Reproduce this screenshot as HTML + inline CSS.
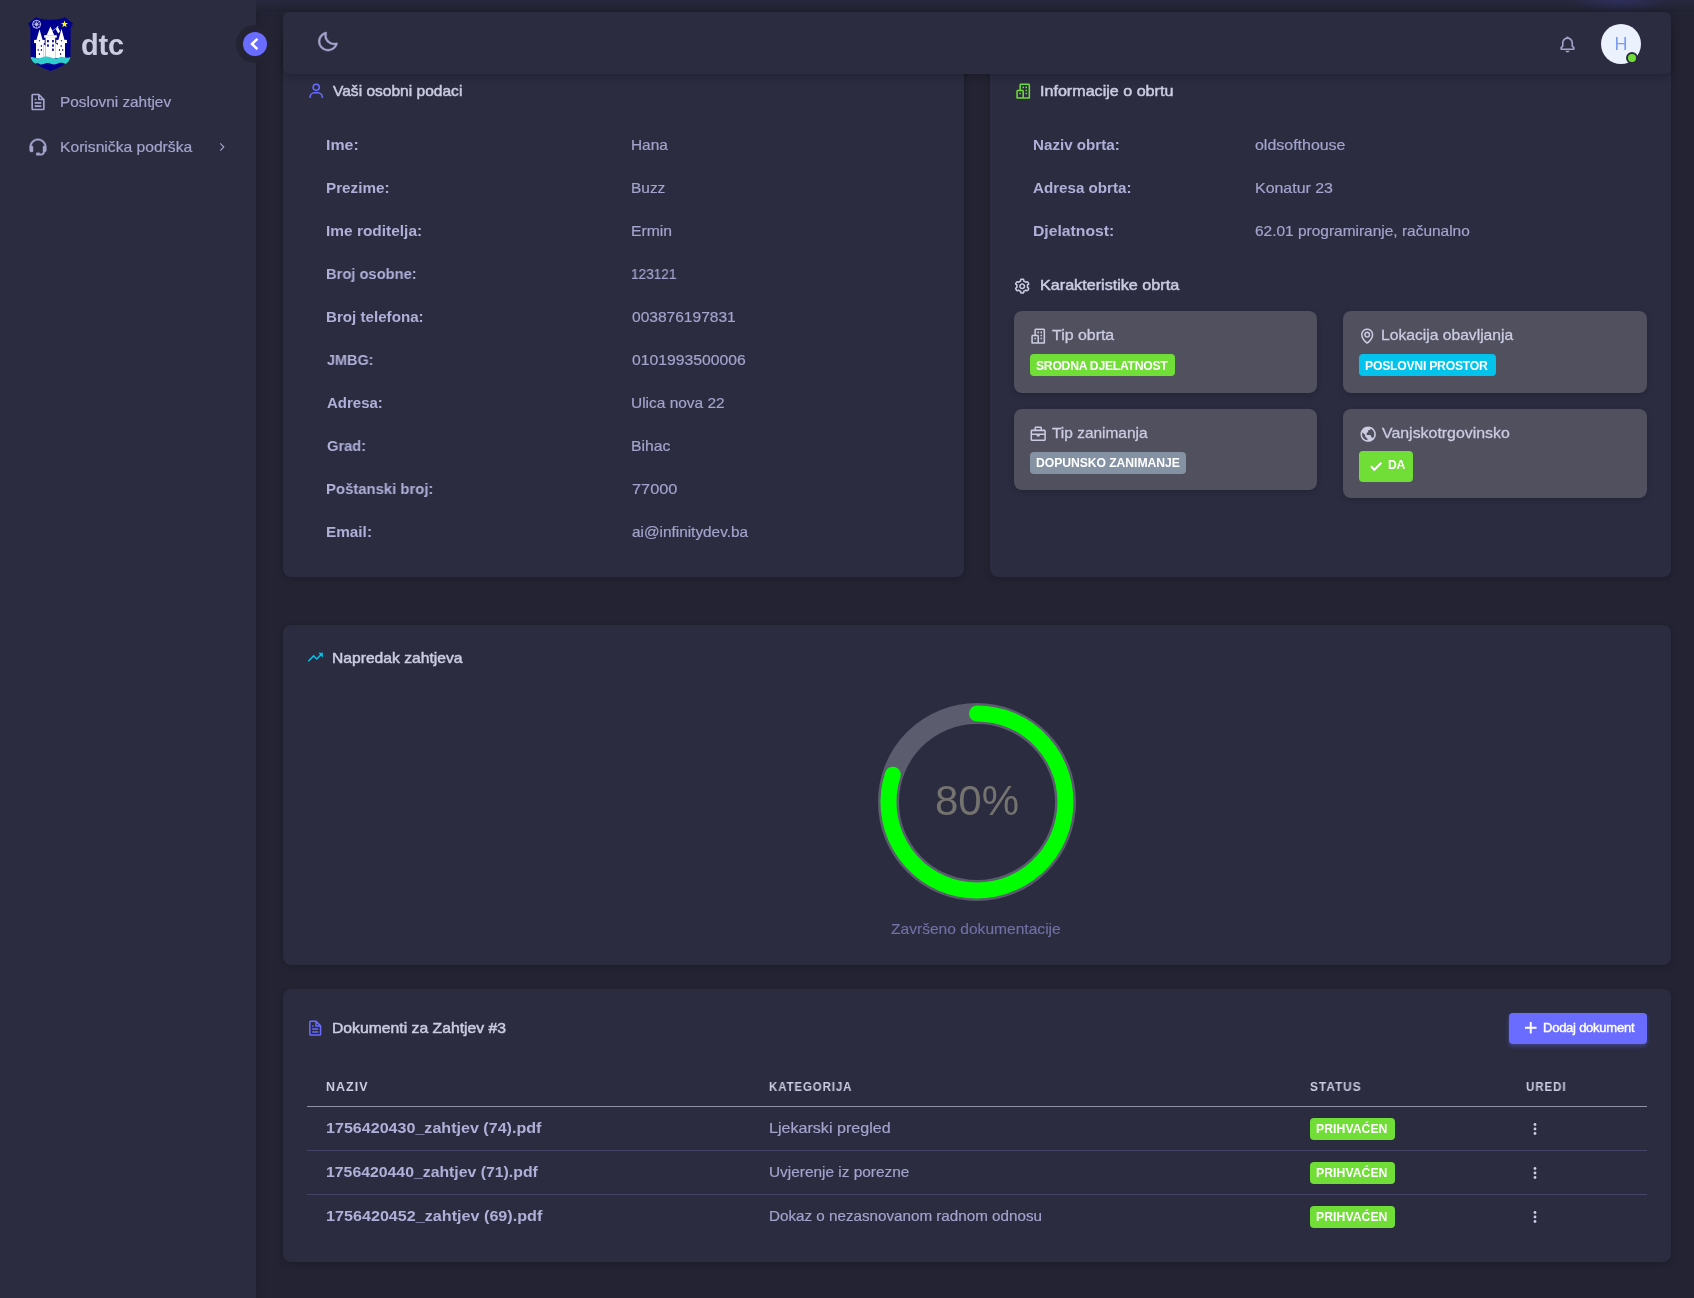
<!DOCTYPE html>
<html lang="bs">
<head>
<meta charset="utf-8">
<title>dtc - Poslovni zahtjev</title>
<style>
*{box-sizing:border-box;margin:0;padding:0}
html,body{width:1694px;height:1298px;overflow:hidden}
body{background:#232333;font-family:"Liberation Sans",sans-serif;color:#a3a4cc;font-size:15px;position:relative}
.abs{position:absolute}
.t{will-change:transform;transform-origin:0 50%;position:absolute;white-space:nowrap;line-height:20px;height:20px}
#sidebar{position:absolute;left:0;top:0;width:256px;height:1298px;background:#2b2c40;box-shadow:0 2px 10px rgba(0,0,0,.2)}
.card{position:absolute;background:#2b2c40;border-radius:8px;box-shadow:0 2px 6px rgba(0,0,0,.2)}
#navbar{position:absolute;left:283px;top:12px;width:1388px;height:62px;background:#2b2c40;border-radius:6px;box-shadow:0 2px 8px rgba(0,0,0,.25)}
.lbl{font-weight:700;color:#afb0d8}
.val{color:#a3a4cc;-webkit-text-stroke:.2px #a3a4cc}
.hd{color:#cbcbe2;font-size:15px;-webkit-text-stroke:.5px #cbcbe2}
.menu{color:#a3a4cc;font-size:15px;-webkit-text-stroke:.2px #a3a4cc}
.box{position:absolute;background:#50505e;border-radius:8px;box-shadow:0 2px 6px rgba(0,0,0,.18)}
.bh{color:#cbcbe2;font-size:15px;-webkit-text-stroke:.3px #cbcbe2}
.badge{position:absolute;color:#fff;font-weight:700;font-size:12px;line-height:21px;height:21px;border-radius:4px;text-align:center;white-space:nowrap}
.th{color:#cbcbe2;font-weight:700;font-size:12px}
.bt{color:#fff;font-weight:700;font-size:12.19px}
.cap{color:#7071a4;font-size:15px;-webkit-text-stroke:.15px #7071a4}
.btn{color:#fff;font-size:13px;-webkit-text-stroke:.4px #fff}
.brand{will-change:transform;position:absolute;white-space:nowrap;font-size:29px;font-weight:700;color:#cbcbe2;line-height:36px;height:36px}
.hr{position:absolute;left:307px;width:1340px;height:1px;background:#444564}
</style>
</head>
<body>

<!-- SIDEBAR -->
<div id="sidebar"></div>

<!-- logo -->
<svg class="abs" style="left:24px;top:12px" width="60" height="64" viewBox="0 0 60 64">
  <path d="M12.3 4.9 L4.2 11.6 L6.4 16.3 L6.6 44.4 C7.5 50 16 55 26.6 59 C37 55 45.6 50 46.5 44.4 L46.7 16.3 L48.9 11.6 L40.6 4.9 C36 8.6 17 8.6 12.3 4.9 Z" fill="#00008f"/>
  <!-- castle -->
  <g fill="#fff">
    <path d="M15.5 17.3 L18.6 27.9 L12.5 27.9 Z"/>
    <rect x="10.1" y="27.9" width="10.6" height="3.2"/>
    <rect x="12" y="30.5" width="7.8" height="16"/>
    <path d="M26.5 14.6 L30.2 23.2 L22.6 23.2 Z"/>
    <rect x="20.2" y="23.2" width="12.6" height="2.5"/>
    <rect x="21.6" y="25.2" width="9.6" height="21.5"/>
    <path d="M37.5 17.1 L40.5 27.9 L34.4 27.9 Z"/>
    <rect x="32.3" y="27.9" width="10.6" height="3.2"/>
    <rect x="34" y="30.5" width="7" height="16"/>
    <path d="M19.8 32.5 L21.6 33.5 L21.6 46 L19.8 46 Z"/>
    <path d="M31.2 31 L34 33 L34 46 L31.2 46 Z"/>
    <path d="M33.4 14 L36 19.5 L34.2 21.4 L32 17.5 Z"/>
  </g>
  <path d="M21.7 24.2 L34.5 14.3" stroke="#fff" stroke-width=".6" fill="none"/>
  <g fill="#1a1a9a">
    <rect x="23" y="28" width="1.9" height="2.3"/><rect x="28" y="28" width="1.9" height="2.3"/>
    <rect x="23" y="32.4" width="1.9" height="2.3"/><rect x="28" y="32.4" width="1.9" height="2.3"/>
    <rect x="28" y="36.6" width="1.9" height="2.3"/>
    <ellipse cx="15.5" cy="28.7" rx=".7" ry=".8"/><ellipse cx="37.5" cy="28.7" rx=".7" ry=".8"/>
    <ellipse cx="17.4" cy="33.9" rx=".7" ry="1"/><ellipse cx="37.2" cy="33.9" rx=".7" ry="1"/>
    <ellipse cx="14.2" cy="37.9" rx=".7" ry="1"/><ellipse cx="17.4" cy="37.9" rx=".7" ry="1"/>
    <ellipse cx="35.5" cy="37.9" rx=".7" ry="1"/><ellipse cx="38.7" cy="37.9" rx=".7" ry="1"/>
    <ellipse cx="15.4" cy="42" rx=".7" ry="1"/><ellipse cx="36.6" cy="42" rx=".7" ry="1"/>
  </g>
  <!-- water -->
  <path d="M6.7 45.2 C10 44 11.5 47.5 15.5 46.3 C20 44.5 23 43.8 27 45.5 C31 47.5 33 46.5 36 45 C39 43.8 42.5 47 46.4 45 C45.8 48.5 44 50.2 41.5 52 C38 50 35 51 31.5 52.3 C28 53 26.5 50.8 23 51 C19.5 51.5 18 53.2 15.8 52.2 C14 51 12.8 50.6 11.5 51.8 C9 50 7.2 48 6.7 45.2 Z" fill="#33cccc"/>
  <!-- star -->
  <path d="M40.5 8.6 L41.4 11 L43.9 11.1 L41.9 12.7 L42.6 15.2 L40.5 13.8 L38.4 15.2 L39.1 12.7 L37.1 11.1 L39.6 11 Z" fill="#ffff00"/>
  <!-- wheel -->
  <g fill="none" stroke="#e8e8ff" stroke-width=".8">
    <circle cx="12.6" cy="12.3" r="4"/>
    <circle cx="12.6" cy="12.3" r="1.2" stroke-width=".6"/>
    <path d="M12.6 8.3v8M8.6 12.3h8M9.8 9.5l5.6 5.6M15.4 9.5l-5.6 5.6" stroke-width=".5"/>
  </g>
</svg>

<!-- toggle -->
<div class="abs" style="left:236px;top:25px;width:38px;height:38px;border-radius:50%;background:#232333"></div>
<div class="abs" style="left:243px;top:32px;width:24px;height:24px;border-radius:50%;background:#696cff"></div>
<svg class="abs" style="left:243px;top:32px" width="24" height="24" viewBox="0 0 24 24"><path d="M14.4 6.8 L9 12 L14.4 17.2" fill="none" stroke="#fff" stroke-width="2.5"/></svg>

<!-- menu items -->
<svg class="abs" style="left:28.15px;top:92.35px" width="20" height="20" viewBox="0 0 24 24" fill="#a3a4cc"><path d="M19.903 8.586a.997.997 0 0 0-.196-.293l-6-6a.997.997 0 0 0-.293-.196c-.03-.014-.062-.022-.094-.033a.991.991 0 0 0-.259-.051C13.040 2.011 13.021 2 13 2H6c-1.103 0-2 .897-2 2v16c0 1.103.897 2 2 2h12c1.103 0 2-.897 2-2V9c0-.021-.011-.04-.013-.062a.952.952 0 0 0-.051-.259c-.01-.032-.019-.063-.033-.093zM16.586 8H14V5.414L16.586 8zM6 20V4h6v5a1 1 0 0 0 1 1h5l.002 10H6z"/><path d="M8 12h8v2H8zm0 4h8v2H8zm0-8h2v2H8z"/></svg>

<svg class="abs" style="left:28px;top:137.4px" width="20" height="20" viewBox="0 0 24 24" fill="#a3a4cc" stroke="#a3a4cc" stroke-width=".5"><path d="M12 2C6.486 2 2 6.486 2 12v4.143C2 17.167 2.897 18 4 18h1a1 1 0 0 0 1-1v-5.143a1 1 0 0 0-1-1h-.908C4.648 6.987 7.978 4 12 4s7.352 2.987 7.908 6.857H19a1 1 0 0 0-1 1V18c0 1.103-.897 2-2 2h-2v-1h-4v3h6c2.206 0 4-1.794 4-4 1.103 0 2-.833 2-1.857V12c0-5.514-4.486-10-10-10z"/></svg>
<svg class="abs" style="left:213.3px;top:138.2px" width="18" height="18" viewBox="0 0 24 24"><path d="M9.7 7.3 L14.4 12 L9.7 16.7" fill="none" stroke="#a3a4cc" stroke-width="1.5"/></svg>

<!-- CARDS (under navbar) -->
<div class="card" style="left:283px;top:30px;width:681px;height:547px"></div>
<div class="card" style="left:990px;top:30px;width:681px;height:547px"></div>
<div class="card" style="left:283px;top:625px;width:1388px;height:340px"></div>
<div class="card" style="left:283px;top:989px;width:1388px;height:272.6px"></div>

<!-- NAVBAR -->
<div class="abs" style="left:256px;top:0;width:1438px;height:12px;background:radial-gradient(ellipse 52px 12px at 1364px 0px,rgba(58,58,140,.4),rgba(58,58,140,0) 100%),linear-gradient(#27283d,#202131)"></div>
<div id="navbar"></div>
<svg class="abs" style="left:315.55px;top:30.05px" width="23.5" height="23.5" viewBox="0 0 24 24" fill="#a3a4cc" stroke="#a3a4cc" stroke-width=".35"><path d="M20.742 13.045a8.088 8.088 0 0 1-2.077.271c-2.135 0-4.140-.83-5.646-2.336a8.025 8.025 0 0 1-2.064-7.723A1 1 0 0 0 9.730 2.034a10.014 10.014 0 0 0-4.489 2.582c-3.898 3.898-3.898 10.243 0 14.143a9.937 9.937 0 0 0 7.072 2.930 9.930 9.930 0 0 0 7.070-2.929 10.007 10.007 0 0 0 2.583-4.491 1.001 1.001 0 0 0-1.224-1.224zm-2.772 4.301a7.947 7.947 0 0 1-5.656 2.343 7.953 7.953 0 0 1-5.658-2.344c-3.118-3.119-3.118-8.195 0-11.314a7.923 7.923 0 0 1 2.060-1.483 10.027 10.027 0 0 0 2.890 7.848 9.972 9.972 0 0 0 7.848 2.891 8.036 8.036 0 0 1-1.484 2.059z"/></svg>
<svg class="abs" style="left:1558px;top:34.7px" width="19" height="19" viewBox="0 0 24 24" fill="#a3a4cc"><path d="M19 13.586V10c0-3.217-2.185-5.927-5.145-6.742C13.562 2.520 12.846 2 12 2s-1.562.520-1.855 1.258C7.185 4.074 5 6.783 5 10v3.586l-1.707 1.707A.996.996 0 0 0 3 16v2a1 1 0 0 0 1 1h16a1 1 0 0 0 1-1v-2a.996.996 0 0 0-.293-.707L19 13.586zM19 17H5v-.586l1.707-1.707A.996.996 0 0 0 7 14v-4c0-2.757 2.243-5 5-5s5 2.243 5 5v4c0 .266.105.520.293.707L19 16.414V17zm-7 5a2.980 2.980 0 0 0 2.818-2H9.182A2.980 2.980 0 0 0 12 22z"/></svg>
<div class="abs" style="left:1601px;top:24px;width:40px;height:40px;border-radius:50%;background:#ebf2fe"></div>
<div class="t" style="left:1601px;top:24px;width:40px;height:40px;line-height:40px;text-align:center;font-size:18px;color:#7c9cf2">H</div>
<div class="abs" style="left:1626px;top:52px;width:12px;height:12px;border-radius:50%;background:#71dd37;border:2px solid #2b2c40"></div>

<!-- CARD 1 content -->
<svg class="abs" style="left:306.5px;top:82px" width="18.4" height="18.4" viewBox="0 0 24 24" fill="#696cff"><path d="M12 2a5 5 0 1 0 5 5 5 5 0 0 0-5-5zm0 8a3 3 0 1 1 3-3 3 3 0 0 1-3 3zm9 11v-1a7 7 0 0 0-7-7h-4a7 7 0 0 0-7 7v1h2v-1a5 5 0 0 1 5-5h4a5 5 0 0 1 5 5v1z"/></svg>


<!-- CARD 2 content -->
<svg class="abs" style="left:1013.9px;top:82px" width="18.4" height="18.4" viewBox="0 0 24 24" fill="#71dd37"><path d="M19 2H9c-1.103 0-2 .897-2 2v6H5c-1.103 0-2 .897-2 2v9a1 1 0 0 0 1 1h16a1 1 0 0 0 1-1V4c0-1.103-.897-2-2-2zM5 12h6v8H5v-8zm14 8h-6v-8c0-1.103-.897-2-2-2H9V4h10v16z"/><path d="M11 6h2v2h-2zm4 0h2v2h-2zm0 4.031h2V12h-2zM15 14h2v2h-2zm-8 .001h2v2H7z"/></svg>

<svg class="abs" style="left:1012.6px;top:277px" width="18.4" height="18.4" viewBox="0 0 24 24" fill="#cbcbe2"><path d="M12 16c2.206 0 4-1.794 4-4s-1.794-4-4-4-4 1.794-4 4 1.794 4 4 4zm0-6c1.084 0 2 .916 2 2s-.916 2-2 2-2-.916-2-2 .916-2 2-2z"/><path d="m2.845 16.136 1 1.730c.531.917 1.809 1.261 2.730.730l.529-.306A8.100 8.100 0 0 0 9 19.402V20c0 1.103.897 2 2 2h2c1.103 0 2-.897 2-2v-.598a8.132 8.132 0 0 0 1.896-1.111l.529.306c.923.530 2.198.188 2.731-.731l.999-1.729a2.001 2.001 0 0 0-.731-2.732l-.505-.292a7.718 7.718 0 0 0 0-2.224l.505-.292a2.002 2.002 0 0 0 .731-2.732l-.999-1.729c-.531-.920-1.808-1.265-2.731-.732l-.529.306A8.100 8.100 0 0 0 15 4.598V4c0-1.103-.897-2-2-2h-2c-1.103 0-2 .897-2 2v.598a8.132 8.132 0 0 0-1.896 1.111l-.529-.306c-.924-.531-2.200-.187-2.731.732l-.999 1.729a2.001 2.001 0 0 0 .731 2.732l.505.292a7.683 7.683 0 0 0 0 2.223l-.505.292a2.003 2.003 0 0 0-.731 2.733zm3.326-2.758A5.703 5.703 0 0 1 6 12c0-.462.058-.926.170-1.378a.999.999 0 0 0-.47-1.108l-1.123-.650.998-1.729 1.145.662a.997.997 0 0 0 1.188-.142 6.071 6.071 0 0 1 2.384-1.399A1 1 0 0 0 11 5.300V4h2v1.300a1 1 0 0 0 .708.956 6.083 6.083 0 0 1 2.384 1.399.999.999 0 0 0 1.188.142l1.144-.661 1 1.729-1.124.649a1 1 0 0 0-.470 1.108c.112.452.170.916.170 1.378 0 .461-.058.925-.171 1.378a1 1 0 0 0 .471 1.108l1.123.649-.998 1.729-1.145-.661a.996.996 0 0 0-1.188.142 6.071 6.071 0 0 1-2.384 1.399A1 1 0 0 0 13 18.700l.002 1.300H11v-1.300a1 1 0 0 0-.708-.956 6.083 6.083 0 0 1-2.384-1.399.992.992 0 0 0-1.188-.141l-1.144.662-1-1.729 1.124-.651a1 1 0 0 0 .471-1.108z"/></svg>

<div class="box" style="left:1014px;top:311px;width:303px;height:82px"></div>
<div class="box" style="left:1343px;top:311px;width:304px;height:82px"></div>
<div class="box" style="left:1014px;top:409px;width:303px;height:81px"></div>
<div class="box" style="left:1343px;top:409px;width:304px;height:89px"></div>

<svg class="abs" style="left:1029px;top:327px" width="18.4" height="18.4" viewBox="0 0 24 24" fill="#cbcbe2"><path d="M19 2H9c-1.103 0-2 .897-2 2v6H5c-1.103 0-2 .897-2 2v9a1 1 0 0 0 1 1h16a1 1 0 0 0 1-1V4c0-1.103-.897-2-2-2zM5 12h6v8H5v-8zm14 8h-6v-8c0-1.103-.897-2-2-2H9V4h10v16z"/><path d="M11 6h2v2h-2zm4 0h2v2h-2zm0 4.031h2V12h-2zM15 14h2v2h-2zm-8 .001h2v2H7z"/></svg>
<div class="badge" style="left:1030px;top:354px;width:145px;height:22px;background:#71dd37"></div>

<svg class="abs" style="left:1358.3px;top:327.2px" width="18.4" height="18.4" viewBox="0 0 24 24" fill="#cbcbe2"><path d="M12 14c2.206 0 4-1.794 4-4s-1.794-4-4-4-4 1.794-4 4 1.794 4 4 4zm0-6c1.103 0 2 .897 2 2s-.897 2-2 2-2-.897-2-2 .897-2 2-2z"/><path d="M11.420 21.814a.998.998 0 0 0 1.160 0C12.884 21.599 20.029 16.440 20 10c0-4.411-3.589-8-8-8S4 5.589 4 9.995c-.029 6.445 7.116 11.604 7.420 11.819zM12 4c3.309 0 6 2.691 6 6.005.021 4.438-4.388 8.423-6 9.730-1.611-1.308-6.021-5.294-6-9.735 0-3.309 2.691-6 6-6z"/></svg>
<div class="badge" style="left:1359px;top:354px;width:137px;height:22px;background:#03c3ec"></div>

<svg class="abs" style="left:1029px;top:425px" width="18.4" height="18.4" viewBox="0 0 24 24" fill="#cbcbe2"><path d="M20 6h-3V4c0-1.103-.897-2-2-2H9c-1.103 0-2 .897-2 2v2H4c-1.103 0-2 .897-2 2v11c0 1.103.897 2 2 2h16c1.103 0 2-.897 2-2V8c0-1.103-.897-2-2-2zm-5-2v2H9V4h6zM8 8h12v3H4V8h4zM4 19v-6h6v2h4v-2h6l.001 6H4z"/></svg>
<div class="badge" style="left:1030px;top:452px;width:156px;height:22px;background:#8592a3"></div>

<svg class="abs" style="left:1358.6px;top:424.8px" width="18.4" height="18.4" viewBox="0 0 24 24" fill="#cbcbe2"><path d="M12 2C6.486 2 2 6.486 2 12s4.486 10 10 10 10-4.486 10-10S17.514 2 12 2zM4 12c0-.899.156-1.762.431-2.569L6 11l2 2v2l2 2 1 1v1.931C7.061 19.436 4 16.072 4 12zm14.330 4.873C17.677 16.347 16.687 16 16 16v-1a2 2 0 0 0-2-2h-4v-3a2 2 0 0 0 2-2V7h1a2 2 0 0 0 2-2v-.411C17.928 5.778 20 8.650 20 12a7.947 7.947 0 0 1-1.670 4.873z"/></svg>
<div class="badge" style="left:1359px;top:451px;width:54px;height:31px;line-height:29px;background:#71dd37;text-align:left;padding-left:30px"></div>
<svg class="abs" style="left:1367.5px;top:458.3px" width="16" height="16" viewBox="0 0 24 24"><path d="M4.5 12.5 L9.5 17.5 L20 7" fill="none" stroke="#fff" stroke-width="3.2"/></svg>

<!-- CARD 3 -->
<svg class="abs" style="left:306.2px;top:649px" width="18.4" height="18.4" viewBox="0 0 24 24" fill="#03c3ec"><path d="m10 10.414 4 4 5.707-5.707L22 11V5h-6l2.293 2.293L14 11.586l-4-4-7.707 7.707 1.414 1.414z"/></svg>

<svg class="abs" style="left:867px;top:692px;will-change:transform" width="220" height="220" viewBox="0 0 220 220">
  <circle cx="110" cy="110" r="88.5" fill="none" stroke="#5b5c6e" stroke-width="21"/>
  <path d="M110 21.5 A88.5 88.5 0 1 1 25.83 82.65" fill="none" stroke="#00ff00" stroke-width="16" stroke-linecap="round"/>
  <text x="110" y="122.6" text-anchor="middle" font-family="Liberation Sans, sans-serif" font-size="42" fill="#75736f">80%</text>
</svg>

<!-- CARD 4 -->
<svg class="abs" style="left:306.2px;top:1019.2px" width="18.4" height="18.4" viewBox="0 0 24 24" fill="#696cff"><path d="M19.903 8.586a.997.997 0 0 0-.196-.293l-6-6a.997.997 0 0 0-.293-.196c-.03-.014-.062-.022-.094-.033a.991.991 0 0 0-.259-.051C13.040 2.011 13.021 2 13 2H6c-1.103 0-2 .897-2 2v16c0 1.103.897 2 2 2h12c1.103 0 2-.897 2-2V9c0-.021-.011-.04-.013-.062a.952.952 0 0 0-.051-.259c-.01-.032-.019-.063-.033-.093zM16.586 8H14V5.414L16.586 8zM6 20V4h6v5a1 1 0 0 0 1 1h5l.002 10H6z"/><path d="M8 12h8v2H8zm0 4h8v2H8zm0-8h2v2H8z"/></svg>

<div class="abs" style="left:1509px;top:1013px;width:138px;height:31px;background:#696cff;border-radius:4px;box-shadow:0 2px 4px rgba(105,108,255,.4)"></div>
<svg class="abs" style="left:1522.5px;top:1020.3px" width="15.5" height="15.5" viewBox="0 0 24 24"><path d="M12 3v18M3 12h18" stroke="#fff" stroke-width="3" fill="none"/></svg>

<div class="hr" style="top:1106px;background:#9192a5"></div>

<div class="badge" style="left:1310px;top:1118px;width:85px;height:22px;background:#71dd37"></div>
<div class="hr" style="top:1150px"></div>

<div class="badge" style="left:1310px;top:1162px;width:85px;height:22px;background:#71dd37"></div>
<div class="hr" style="top:1194px"></div>

<div class="badge" style="left:1310px;top:1206px;width:85px;height:22px;background:#71dd37"></div>

<svg class="abs" style="left:1526px;top:1120px" width="18" height="18" viewBox="0 0 24 24" fill="#cbcbe2"><circle cx="12" cy="6" r="1.9"/><circle cx="12" cy="12" r="1.9"/><circle cx="12" cy="18" r="1.9"/></svg>
<svg class="abs" style="left:1526px;top:1164px" width="18" height="18" viewBox="0 0 24 24" fill="#cbcbe2"><circle cx="12" cy="6" r="1.9"/><circle cx="12" cy="12" r="1.9"/><circle cx="12" cy="18" r="1.9"/></svg>
<svg class="abs" style="left:1526px;top:1208px" width="18" height="18" viewBox="0 0 24 24" fill="#cbcbe2"><circle cx="12" cy="6" r="1.9"/><circle cx="12" cy="12" r="1.9"/><circle cx="12" cy="18" r="1.9"/></svg>

<div class="brand" style="left:80.88px;top:26.5px;letter-spacing:-0.225px;">dtc</div>
<div class="t menu" style="left:59.54px;top:92px;transform:scaleX(1.0250);">Poslovni zahtjev</div>
<div class="t menu" style="left:59.54px;top:137px;transform:scaleX(1.0429);">Korisnička podrška</div>
<div class="t hd" style="left:333.39px;top:81px;transform:scaleX(1.0364);">Vaši osobni podaci</div>
<div class="t hd" style="left:1039.71px;top:81px;transform:scaleX(1.0733);">Informacije o obrtu</div>
<div class="t hd" style="left:1039.71px;top:275px;transform:scaleX(1.0768);">Karakteristike obrta</div>
<div class="t hd" style="left:332.49px;top:648px;transform:scaleX(1.0433);">Napredak zahtjeva</div>
<div class="t hd" style="left:332.15px;top:1018px;transform:scaleX(1.0491);">Dokumenti za Zahtjev #3</div>
<div class="t lbl" style="left:325.93px;top:135px;transform:scaleX(1.0628);">Ime:</div>
<div class="t lbl" style="left:325.93px;top:178px;transform:scaleX(1.0153);">Prezime:</div>
<div class="t lbl" style="left:325.93px;top:221px;transform:scaleX(1.0297);">Ime roditelja:</div>
<div class="t lbl" style="left:325.93px;top:264px;transform:scaleX(0.9801);">Broj osobne:</div>
<div class="t lbl" style="left:325.93px;top:307px;transform:scaleX(1.0096);">Broj telefona:</div>
<div class="t lbl" style="left:327.00px;top:350px;transform:scaleX(0.9622);">JMBG:</div>
<div class="t lbl" style="left:327.00px;top:393px;">Adresa:</div>
<div class="t lbl" style="left:326.83px;top:436px;transform:scaleX(0.9776);">Grad:</div>
<div class="t lbl" style="left:325.93px;top:479px;transform:scaleX(0.9916);">Poštanski broj:</div>
<div class="t lbl" style="left:325.93px;top:522px;transform:scaleX(1.0215);">Email:</div>
<div class="t val" style="left:631.10px;top:135px;transform:scaleX(1.0257);">Hana</div>
<div class="t val" style="left:631.10px;top:178px;transform:scaleX(1.0292);">Buzz</div>
<div class="t val" style="left:631.10px;top:221px;transform:scaleX(1.0481);">Ermin</div>
<div class="t val" style="left:631.10px;top:264px;transform:scaleX(0.9083);">123121</div>
<div class="t val" style="left:631.61px;top:307px;transform:scaleX(1.0360);">003876197831</div>
<div class="t val" style="left:631.61px;top:350px;transform:scaleX(1.0501);">0101993500006</div>
<div class="t val" style="left:630.71px;top:393px;transform:scaleX(1.0302);">Ulica nova 22</div>
<div class="t val" style="left:630.71px;top:436px;transform:scaleX(1.0500);">Bihac</div>
<div class="t val" style="left:631.61px;top:479px;transform:scaleX(1.0883);">77000</div>
<div class="t val" style="left:631.61px;top:522px;transform:scaleX(1.0237);">ai@infinitydev.ba</div>
<div class="t lbl" style="left:1032.54px;top:135px;transform:scaleX(1.0109);">Naziv obrta:</div>
<div class="t lbl" style="left:1033.44px;top:178px;transform:scaleX(1.0095);">Adresa obrta:</div>
<div class="t lbl" style="left:1032.54px;top:221px;transform:scaleX(1.0482);">Djelatnost:</div>
<div class="t val" style="left:1255.17px;top:135px;transform:scaleX(1.0636);">oldsofthouse</div>
<div class="t val" style="left:1254.66px;top:178px;transform:scaleX(1.0627);">Konatur 23</div>
<div class="t val" style="left:1254.61px;top:221px;transform:scaleX(1.0304);">62.01 programiranje, računalno</div>
<div class="t bh" style="left:1052.48px;top:325px;transform:scaleX(1.0611);">Tip obrta</div>
<div class="t bh" style="left:1380.64px;top:325px;transform:scaleX(1.0429);">Lokacija obavljanja</div>
<div class="t bh" style="left:1052.48px;top:423px;transform:scaleX(1.0292);">Tip zanimanja</div>
<div class="t bh" style="left:1381.54px;top:423px;transform:scaleX(1.0600);">Vanjskotrgovinsko</div>
<div class="t bt" style="left:1035.64px;top:356px;letter-spacing:-0.270px;">SRODNA DJELATNOST</div>
<div class="t bt" style="left:1365.16px;top:356px;letter-spacing:-0.240px;">POSLOVNI PROSTOR</div>
<div class="t bt" style="left:1035.64px;top:453px;letter-spacing:-0.064px;">DOPUNSKO ZANIMANJE</div>
<div class="t bt" style="left:1388.12px;top:454.6px;letter-spacing:-0.180px;">DA</div>
<div class="t cap" style="left:891.44px;top:919px;transform:scaleX(1.0387);">Završeno dokumentacije</div>
<div class="t btn" style="left:1542.54px;top:1018px;letter-spacing:-0.242px;">Dodaj dokument</div>
<div class="t th" style="left:326.27px;top:1077px;letter-spacing:1.000px;transform:scaleX(1.0393);">NAZIV</div>
<div class="t th" style="left:768.54px;top:1077px;letter-spacing:1.000px;transform:scaleX(0.9503);">KATEGORIJA</div>
<div class="t th" style="left:1310.39px;top:1077px;letter-spacing:1.000px;transform:scaleX(0.9877);">STATUS</div>
<div class="t th" style="left:1525.83px;top:1077px;letter-spacing:1.000px;transform:scaleX(0.9584);">UREDI</div>
<div class="t lbl" style="left:326.27px;top:1118px;transform:scaleX(1.0720);">1756420430_zahtjev (74).pdf</div>
<div class="t lbl" style="left:326.27px;top:1162px;transform:scaleX(1.0540);">1756420440_zahtjev (71).pdf</div>
<div class="t lbl" style="left:326.27px;top:1206px;transform:scaleX(1.0765);">1756420452_zahtjev (69).pdf</div>
<div class="t val" style="left:768.54px;top:1118px;transform:scaleX(1.0724);">Ljekarski pregled</div>
<div class="t val" style="left:768.54px;top:1162px;transform:scaleX(1.0266);">Uvjerenje iz porezne</div>
<div class="t val" style="left:768.54px;top:1206px;transform:scaleX(1.0134);">Dokaz o nezasnovanom radnom odnosu</div>
<div class="t bt" style="left:1316.16px;top:1118.7px;letter-spacing:0.068px;">PRIHVAĆEN</div>
<div class="t bt" style="left:1316.16px;top:1162.7px;letter-spacing:0.068px;">PRIHVAĆEN</div>
<div class="t bt" style="left:1316.16px;top:1206.7px;letter-spacing:0.068px;">PRIHVAĆEN</div>
</body>
</html>
